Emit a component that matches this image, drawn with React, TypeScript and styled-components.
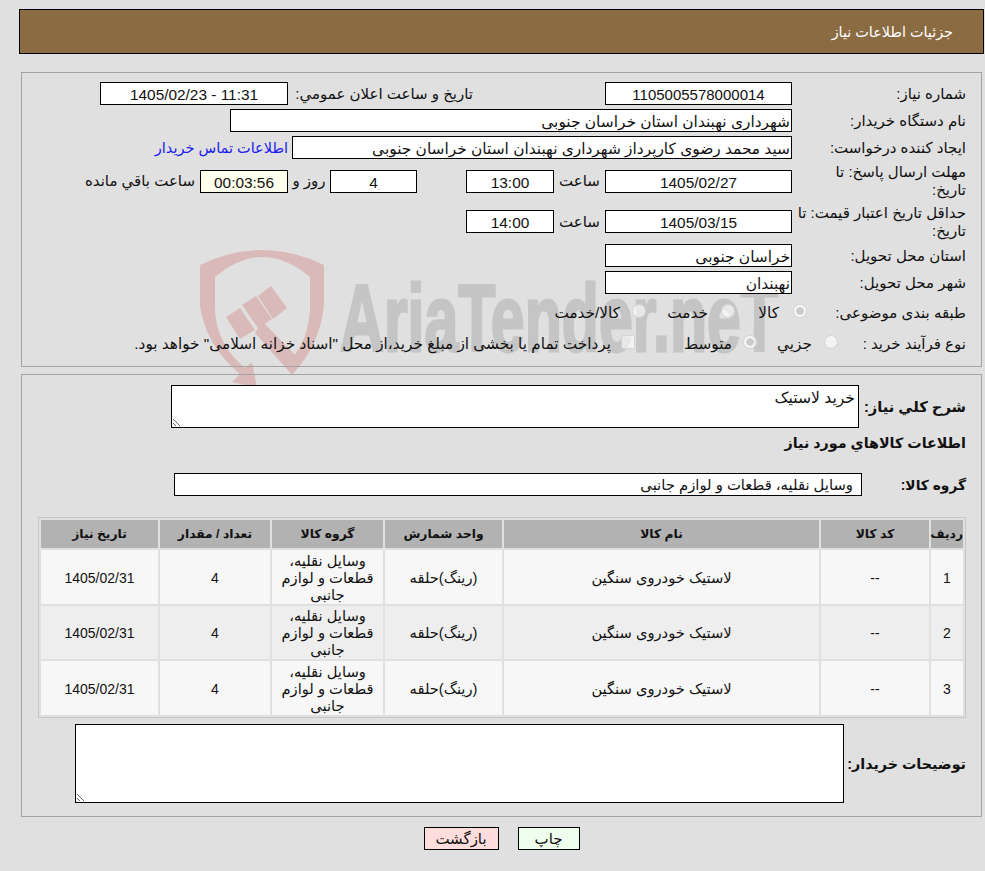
import React from 'react';
import styled, { createGlobalStyle } from 'styled-components';

const GlobalStyle = createGlobalStyle`
  html, body {
    margin: 0;
    padding: 0;
    background: #e0e0e0;
  }
  body {
    font-family: 'Liberation Sans', 'DejaVu Sans', sans-serif;
    font-size: 15px;
    color: #111;
  }
`;

const Page = styled.div`
  position: relative;
  direction: rtl;
  width: 985px;
  height: 871px;
  overflow: hidden;
  box-sizing: border-box;
  padding: 9px 1px 0 19px;
`;

const Watermark = styled.svg`
  position: absolute;
  left: 0;
  top: 0;
  width: 985px;
  height: 420px;
`;

const Content = styled.div`
  position: relative;
`;

const Header = styled.div`
  height: 43px;
  background: #8b6b42;
  border: 1px solid #000;
  color: #fff;
  display: flex;
  align-items: center;
  padding-right: 30px;
  font-size: 14.4px;
`;

const Panel = styled.div<{ $top: number }>`
  margin: ${p => p.$top}px 2px 0 2px;
  border: 1px solid #a3a3a3;
  box-sizing: border-box;
`;

const InfoGrid = styled.div`
  display: flex;
  flex-direction: column;
  gap: 4px;
  padding: 9px 15px 10px 0;
`;

const Row = styled.div<{ $h?: number }>`
  display: flex;
  align-items: center;
  height: ${p => p.$h ?? 23}px;
`;

const RowLabel = styled.div<{ $w?: number }>`
  flex: none;
  width: ${p => p.$w ?? 174}px;
  line-height: 18px;
  white-space: nowrap;
`;

const Field = styled.div<{ $w: number; $center?: boolean; $pad?: number; $bg?: string; $size?: number }>`
  flex: none;
  width: ${p => p.$w}px;
  height: 23px;
  line-height: 23px;
  box-sizing: border-box;
  border: 1px solid #000;
  background: ${p => p.$bg ?? '#fff'};
  padding: 0 ${p => p.$pad ?? 1}px;
  font-size: ${p => p.$size ?? 15.4}px;
  text-align: ${p => (p.$center ? 'center' : 'right')};
  white-space: nowrap;
  overflow: hidden;
`;

const Caption = styled.div<{ $w?: number; $before?: number; $center?: boolean }>`
  flex: none;
  ${p => (p.$w ? `width: ${p.$w}px;` : '')}
  margin-right: ${p => p.$before ?? 0}px;
  text-align: ${p => (p.$center ? 'center' : 'right')};
  white-space: nowrap;
`;

const ContactLink = styled.a`
  color: #1a1aee;
  text-decoration: none;
  margin-right: 4px;
  font-size: 14.5px;
  white-space: nowrap;
`;

const Option = styled.label<{ $w: number; $gap?: number }>`
  flex: none;
  width: ${p => p.$w}px;
  display: flex;
  align-items: center;
  gap: ${p => p.$gap ?? 12}px;
  font-size: 15.3px;
  white-space: nowrap;
`;

const Radio = styled.input.attrs({ type: 'radio', disabled: true })`
  appearance: none;
  flex: none;
  width: 14px;
  height: 14px;
  margin: -5px 0 0 0;
  box-sizing: border-box;
  border-radius: 50%;
  border: 1px solid rgba(205, 205, 205, 0.8);
  background: rgba(255, 255, 255, 0.6);
  &:checked {
    background: radial-gradient(circle, #cbcbcb 0 3.5px, rgba(255, 255, 255, 0.7) 4px);
  }
`;

const Check = styled.input.attrs({ type: 'checkbox', disabled: true })`
  appearance: none;
  flex: none;
  width: 14px;
  height: 14px;
  margin: -5px 0 0 0;
  box-sizing: border-box;
  border-radius: 2px;
  border: 1px solid rgba(205, 205, 205, 0.8);
  background: rgba(255, 255, 255, 0.6);
`;

const DetailBody = styled.div`
  padding: 10px 15px 13px 16px;
`;

const BoldLabel = styled.div<{ $w?: number; $size?: number }>`
  flex: none;
  ${p => (p.$w ? `width: ${p.$w}px;` : '')}
  font-size: ${p => p.$size ?? 14.3}px;
  font-weight: 700;
  white-space: nowrap;
`;

const Heading = styled(BoldLabel)`
  margin-top: 5px;
  height: 20px;
  line-height: 20px;
`;

const BlockRow = styled.div<{ $h: number; $top?: number }>`
  display: flex;
  align-items: center;
  height: ${p => p.$h}px;
  margin-top: ${p => p.$top ?? 0}px;
`;

const Memo = styled.textarea<{ $w: number; $h: number }>`
  flex: none;
  display: block;
  width: ${p => p.$w}px;
  height: ${p => p.$h}px;
  box-sizing: border-box;
  margin: 0;
  padding: 3px 3px;
  border: 1px solid #000;
  border-radius: 0;
  outline: none;
  background: #fff;
  color: #111;
  font: inherit;
  font-size: 15.6px;
  direction: rtl;
`;

const GoodsTable = styled.table`
  width: 928px;
  margin-top: 21px;
  table-layout: fixed;
  border-collapse: separate;
  border-spacing: 2px;
  border: 1px solid #c6c6c6;
  box-sizing: border-box;
`;

const Col = styled.col<{ $w: number }>`
  width: ${p => p.$w}px;
`;

const HeadCell = styled.th`
  height: 28px;
  padding: 0 0 1px;
  box-sizing: border-box;
  background: #b2b2b2;
  font-size: 12.3px;
  font-weight: 700;
  text-align: center;
`;

const BodyRow = styled.tr<{ $alt?: boolean }>`
  height: ${p => (p.$alt ? 53 : 54)}px;
  background: ${p => (p.$alt ? '#eeeeee' : '#f7f7f7')};
`;

const Cell = styled.td<{ $num?: boolean }>`
  padding: 2px 6px 0;
  text-align: center;
  font-size: ${p => (p.$num ? 14 : 14.7)}px;
  line-height: 17px;
`;

const Actions = styled.div`
  display: flex;
  justify-content: center;
  gap: 19px;
  margin-top: 10px;
`;

const ActionButton = styled.button<{ $w: number; $bg: string }>`
  width: ${p => p.$w}px;
  height: 23px;
  padding: 0;
  border: 1px solid #000;
  border-radius: 0;
  background: ${p => p.$bg};
  color: #111;
  font: inherit;
`;

const goods = [1, 2, 3];

const Logo: React.FC = () => (
  <Watermark viewBox="0 0 985 420">
    <g fill="#dab9b9">
      <path d="M200 265 Q262 235 324 265 L324 305 Q320 345 292 375 L292 358 Q308 340 310 310 L310 277 Q262 237 215 277 L215 310 Q217 345 245 368 L252 362 L257 388 L232 382 L240 374 Q205 345 200 305 Z" />
      <polygon points="226,317 240,308 255,330 240,339" />
      <polygon points="242,305 256,296 272,319 265,324 298,358 292,375 255,333 258,328" />
      <polygon points="258,296 271,286 287,308 273,319" />
    </g>
    <text
      x="340"
      y="351"
      direction="ltr"
      fill="#c5c5c5"
      stroke="#c5c5c5"
      strokeWidth="3"
      fontFamily="'Liberation Sans', sans-serif"
      fontWeight="700"
      fontSize="95"
      textLength="438"
      lengthAdjust="spacingAndGlyphs"
    >
      AriaTender.neT
    </text>
  </Watermark>
);

const App: React.FC = () => (
  <Page>
    <GlobalStyle />
    <Logo />
    <Content>
      <Header>جزئیات اطلاعات نیاز</Header>

      <Panel $top={18}>
        <InfoGrid>
          <Row>
            <RowLabel>شماره نیاز:</RowLabel>
            <Field $w={187} $center $size={15}>1105005578000014</Field>
            <Caption $before={132} $w={185}>تاریخ و ساعت اعلان عمومي:</Caption>
            <Field $w={188} $center>11:31 - 1405/02/23</Field>
          </Row>
          <Row>
            <RowLabel>نام دستگاه خریدار:</RowLabel>
            <Field $w={562}>شهرداری نهبندان استان خراسان جنوبی</Field>
          </Row>
          <Row>
            <RowLabel>ایجاد کننده درخواست:</RowLabel>
            <Field $w={500}>سید محمد رضوی کارپرداز شهرداری نهبندان استان خراسان جنوبی</Field>
            <ContactLink href="#">اطلاعات تماس خریدار</ContactLink>
          </Row>
          <Row $h={36}>
            <RowLabel>مهلت ارسال پاسخ: تا<br />تاریخ:</RowLabel>
            <Field $w={187} $center>1405/02/27</Field>
            <Caption $w={51} $center>ساعت</Caption>
            <Field $w={88} $center>13:00</Field>
            <Caption $w={49} />
            <Field $w={87} $center>4</Field>
            <Caption $w={42} $center>روز و</Caption>
            <Field $w={88} $center $bg="#ffffee">00:03:56</Field>
            <Caption $before={5}>ساعت باقي مانده</Caption>
          </Row>
          <Row $h={37}>
            <RowLabel>حداقل تاریخ اعتبار قیمت: تا<br />تاریخ:</RowLabel>
            <Field $w={187} $center>1405/03/15</Field>
            <Caption $w={51} $center>ساعت</Caption>
            <Field $w={88} $center>14:00</Field>
          </Row>
          <Row>
            <RowLabel>استان محل تحویل:</RowLabel>
            <Field $w={187}>خراسان جنوبی</Field>
          </Row>
          <Row>
            <RowLabel>شهر محل تحویل:</RowLabel>
            <Field $w={187}>نهبندان</Field>
          </Row>
          <Row $h={30}>
            <RowLabel $w={159}>طبقه بندی موضوعی:</RowLabel>
            <Option $w={72} $gap={14}><Radio defaultChecked />کالا</Option>
            <Option $w={89} $gap={13}><Radio />خدمت</Option>
            <Option $w={100} $gap={12}><Radio />کالا/خدمت</Option>
          </Row>
          <Row $h={24}>
            <RowLabel $w={128}>نوع فرآیند خرید :</RowLabel>
            <Option $w={81}><Radio />جزيي</Option>
            <Option $w={122} $gap={11}><Radio defaultChecked />متوسط</Option>
            <Option $w={500} $gap={10}><Check />پرداخت تمام یا بخشی از مبلغ خرید،از محل "اسناد خزانه اسلامی" خواهد بود.</Option>
          </Row>
        </InfoGrid>
      </Panel>

      <Panel $top={7}>
        <DetailBody>
          <BlockRow $h={43}>
            <BoldLabel $w={107} $size={14.7}>شرح کلي نیاز:</BoldLabel>
            <Memo $w={688} $h={43} readOnly value="خرید لاستیک" />
          </BlockRow>
          <Heading>اطلاعات کالاهاي مورد نیاز</Heading>
          <BlockRow $h={23} $top={20}>
            <BoldLabel $w={104} $size={13.8}>گروه کالا:</BoldLabel>
            <Field $w={688} $pad={8} $size={14.8}>وسایل نقلیه، قطعات و لوازم جانبی</Field>
          </BlockRow>
          <GoodsTable>
            <colgroup>
              <Col $w={32} />
              <Col $w={108} />
              <Col $w={315} />
              <Col $w={117} />
              <Col $w={111} />
              <Col $w={110} />
              <Col $w={117} />
            </colgroup>
            <thead>
              <tr>
                <HeadCell>ردیف</HeadCell>
                <HeadCell>کد کالا</HeadCell>
                <HeadCell>نام کالا</HeadCell>
                <HeadCell>واحد شمارش</HeadCell>
                <HeadCell>گروه کالا</HeadCell>
                <HeadCell>تعداد / مقدار</HeadCell>
                <HeadCell>تاریخ نیاز</HeadCell>
              </tr>
            </thead>
            <tbody>
              {goods.map(n => (
                <BodyRow key={n} $alt={n === 2}>
                  <Cell $num>{n}</Cell>
                  <Cell $num>--</Cell>
                  <Cell>لاستیک خودروی سنگین</Cell>
                  <Cell>(رینگ)حلقه</Cell>
                  <Cell>وسایل نقلیه، قطعات و لوازم جانبی</Cell>
                  <Cell $num>4</Cell>
                  <Cell $num>1405/02/31</Cell>
                </BodyRow>
              ))}
            </tbody>
          </GoodsTable>
          <BlockRow $h={79} $top={6}>
            <BoldLabel $w={122}>توضیحات خریدار:</BoldLabel>
            <Memo $w={769} $h={79} readOnly value="" />
          </BlockRow>
        </DetailBody>
      </Panel>

      <Actions>
        <ActionButton $w={62} $bg="#eeffee">چاپ</ActionButton>
        <ActionButton $w={75} $bg="#ffdddd">بازگشت</ActionButton>
      </Actions>
    </Content>
  </Page>
);

export default App;
